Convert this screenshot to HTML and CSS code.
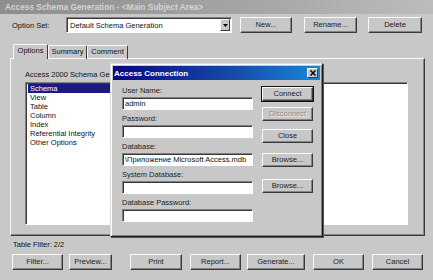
FILE: index.html
```html
<!DOCTYPE html>
<html>
<head lang="en">
    <meta charset="UTF-8">
    <title>Access Schema Generation</title>
    <link rel="stylesheet" href="styles.css">
</head>
<body>
<div class="window">
    <div class="titlebar">Access Schema Generation - &lt;Main Subject Area&gt;</div>

    <div class="option-row">
        <span class="option-label">Option Set:</span>
        <div class="combo">
            <span class="combo-text">Default Schema Generation</span>
            <span class="combo-btn">
                <svg width="5" height="3" viewBox="0 0 5 3"><path d="M0 0h5L2.5 3z" fill="#000"/></svg>
            </span>
        </div>
        <button class="btn btn-new">New...</button>
        <button class="btn btn-rename">Rename...</button>
        <button class="btn btn-delete">Delete</button>
    </div>

    <div class="tabs">
        <span class="tab active">Options</span>
        <span class="tab">Summary</span>
        <span class="tab">Comment</span>
    </div>

    <div class="panel">
        <div class="panel-caption">Access 2000 Schema Generation Options</div>
        <div class="panel-body">
            <ul class="listbox">
                <li class="selected">Schema</li>
                <li>View</li>
                <li>Table</li>
                <li>Column</li>
                <li>Index</li>
                <li>Referential Integrity</li>
                <li>Other Options</li>
            </ul>
            <div class="props"></div>
        </div>
    </div>

    <div class="filter">Table Filter: 2/2</div>

    <div class="bottom-row">
        <button class="btn b-filter">Filter...</button>
        <button class="btn b-preview">Preview...</button>
        <button class="btn b-print">Print</button>
        <button class="btn b-report">Report...</button>
        <button class="btn b-generate">Generate...</button>
        <button class="btn b-ok">OK</button>
        <button class="btn b-cancel">Cancel</button>
    </div>

    <!-- modal dialog on top of the options tab -->
    <div class="dialog">
        <div class="dlg-title">
            <span>Access Connection</span>
            <span class="dlg-close">
                <svg width="6" height="6" viewBox="0 0 6 6"><path d="M0.5 0.5l5 5M5.5 0.5l-5 5" stroke="#000" stroke-width="1.5"/></svg>
            </span>
        </div>
        <div class="dlg-body">
            <div class="fields">
                <div class="field">
                    <div class="field-label">User Name:</div>
                    <div class="input">admin</div>
                </div>
                <div class="field">
                    <div class="field-label">Password:</div>
                    <div class="input"></div>
                </div>
                <div class="field">
                    <div class="field-label">Database:</div>
                    <div class="input">\Приложение Microsoft Access.mdb</div>
                </div>
                <div class="field">
                    <div class="field-label">System Database:</div>
                    <div class="input"></div>
                </div>
                <div class="field">
                    <div class="field-label">Database Password:</div>
                    <div class="input"></div>
                </div>
            </div>
            <div class="dlg-buttons">
                <button class="btn default">Connect</button>
                <button class="btn disabled">Disconnect</button>
                <button class="btn d-close">Close</button>
                <button class="btn d-browse">Browse...</button>
                <button class="btn d-browse2">Browse...</button>
            </div>
        </div>
    </div>
</div>
</body>
</html>
```

FILE: styles.css
```css
@charset "UTF-8";
/*initial reset*/
body,ul,li{margin:0;padding:0}
ul{list-style:none}
body{
    font:7.5px/9px "Liberation Sans", "Noto Sans CJK SC", sans-serif;
    color:#111;
    background:#c8c8c8;
}

.window{
    width:433px;
    height:280px;
    position:relative;
    overflow:hidden;
    background:#c8c8c8;
}
.titlebar{
    height:14px;
    line-height:14px;
    padding-left:5px;
    font-weight:bold;
    font-size:8.3px;
    color:#d4d4d4;
    background:linear-gradient(to right, #8e8e8e, #a6a6a6 60%, #bcbcbc);
    white-space:nowrap;
}

/* generic classic buttons */
.btn{
    display:block;
    box-sizing:border-box;
    height:16px;
    padding:0;
    margin:0;
    font:7.5px/14px "Liberation Sans", sans-serif;
    color:#222;
    background:#c8c8c8;
    border:1px solid;
    border-color:#fafafa #3a3a3a #3a3a3a #fafafa;
    box-shadow:inset -1px -1px 0 #848484;
    text-align:center;
}

.option-row{
    display:flex;
    align-items:center;
    margin-top:3px;
    padding-left:12px;
    height:16px;
}
.option-label{
    width:54px;
}
.combo{
    box-sizing:border-box;
    width:166px;
    height:16px;
    display:flex;
    align-items:center;
    background:#fff;
    border:1px solid;
    border-color:#808080 #fff #fff #808080;
    box-shadow:inset 1px 1px 0 #3a3a3a;
}
.combo-text{
    flex:1;
    padding-left:3px;
}
.combo-btn{
    box-sizing:border-box;
    width:10px;
    height:12px;
    margin-right:1px;
    display:flex;
    align-items:center;
    justify-content:center;
    background:#c8c8c8;
    border:1px solid;
    border-color:#fafafa #3a3a3a #3a3a3a #fafafa;
}
.btn-new{ width:52px; margin-left:8px; }
.btn-rename{ width:53px; margin-left:12px; }
.btn-delete{ width:54px; margin-left:11px; }

.tabs{
    display:flex;
    margin-top:11px;
    padding-left:13px;
    height:14px;
}
.tab{
    box-sizing:border-box;
    height:14px;
    margin-top:1px;
    line-height:12px;
    text-align:center;
    border:1px solid;
    border-bottom:0;
    border-color:#fafafa #3a3a3a #3a3a3a #fafafa;
    border-radius:2px 2px 0 0;
}
.tab.active{
    margin-top:0;
    height:15px;
    position:relative;
    z-index:1;
    background:#c8c8c8;
}
.tabs .tab:nth-child(1){ width:35px; }
.tabs .tab:nth-child(2){ width:39px; }
.tabs .tab:nth-child(3){ width:41px; }

.panel{
    box-sizing:border-box;
    width:415px;
    height:178px;
    margin-left:10px;
    padding:11px 16px 0 14px;
    border:1px solid;
    border-color:#fafafa #3a3a3a #3a3a3a #fafafa;
    box-shadow:inset -1px -1px 0 #848484;
}
.panel-caption{
    width:86px;
    height:9px;
    white-space:nowrap;
    overflow:hidden;
}
.panel-body{
    display:flex;
    margin-top:3px;
    height:143px;
}
.listbox,
.props{
    box-sizing:border-box;
    height:143px;
    background:#fff;
    border:1px solid;
    border-color:#808080 #fff #fff #808080;
    box-shadow:inset 1px 1px 0 #3a3a3a;
}
.listbox{
    width:186px;
    padding:1px 1px 0 2px;
}
.listbox li{
    height:9px;
    padding-left:2px;
}
.listbox li.selected{
    background:#1a1a82;
    color:#fff;
}
.props{
    width:197px;
    margin-left:auto;
}

.filter{
    margin-top:4px;
    padding-left:13px;
    height:10px;
    line-height:10px;
}
.bottom-row{
    display:flex;
    margin-top:4px;
    padding-left:12px;
}
.b-filter{ width:51px; }
.b-preview{ width:43px; margin-left:6px; }
.b-print{ width:52px; margin-left:18px; }
.b-report{ width:51px; margin-left:8px; }
.b-generate{ width:58px; margin-left:6px; }
.b-ok{ width:51px; margin-left:8px; }
.b-cancel{ width:51px; margin-left:8px; }

/* Access Connection dialog */
.dialog{
    position:absolute;
    left:110px;
    top:63px;
    width:213px;
    height:174px;
    box-sizing:border-box;
    padding:2px;
    background:#c8c8c8;
    border:1px solid;
    border-color:#dcdcdc #1a1a1a #1a1a1a #dcdcdc;
    box-shadow:inset 1px 1px 0 #fff, inset -1px -1px 0 #808080, 1px 1px 0 #555;
    z-index:5;
}
.dlg-title{
    display:flex;
    align-items:center;
    justify-content:space-between;
    height:14px;
    padding:0 2px 0 1px;
    font-weight:bold;
    font-size:8px;
    color:#fff;
    background:linear-gradient(to right, #08087e, #1646a8 55%, #1a86d6);
}
.dlg-close{
    box-sizing:border-box;
    width:11px;
    height:10px;
    display:flex;
    align-items:center;
    justify-content:center;
    background:#c8c8c8;
    border:1px solid;
    border-color:#fafafa #3a3a3a #3a3a3a #fafafa;
}
.dlg-body{
    display:flex;
    padding:6px 0 0 9px;
}
.fields{
    width:131px;
    display:flex;
    flex-direction:column;
    gap:4px;
}
.field-label{
    height:9px;
    margin-bottom:2px;
    color:#222;
}
.input{
    box-sizing:border-box;
    height:13px;
    padding-left:2px;
    line-height:11px;
    background:#fff;
    border:1px solid;
    border-color:#808080 #fff #fff #808080;
    box-shadow:inset 1px 1px 0 #3a3a3a;
    white-space:nowrap;
    overflow:hidden;
}
.dlg-buttons{
    margin-left:9px;
    width:51px;
    display:flex;
    flex-direction:column;
}
.dlg-buttons .btn{
    height:14px;
    line-height:12px;
}
.btn.default{
    outline:1px solid #111;
    outline-offset:0;
    margin-top:1px;
}
.btn.disabled{
    margin-top:6px;
    color:#8c8c8c;
    text-shadow:1px 1px 0 #f0f0f0;
}
.d-close{ margin-top:8px; }
.d-browse{ margin-top:10px; }
.d-browse2{ margin-top:12px; }
```
